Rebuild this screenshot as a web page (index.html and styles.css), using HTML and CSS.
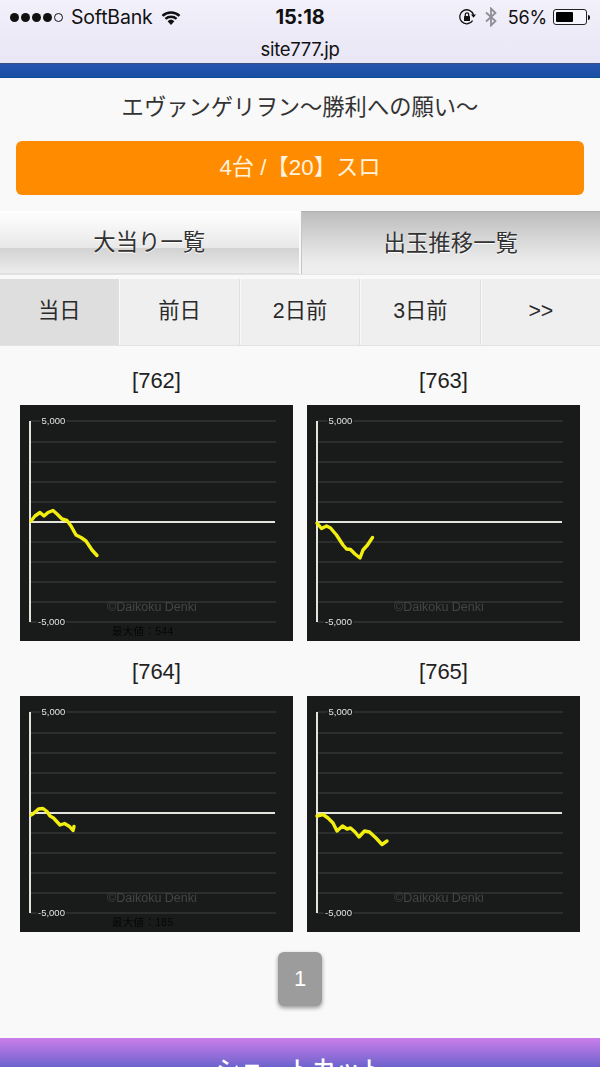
FILE: index.html
```html
<!DOCTYPE html>
<html lang="ja">
<head>
<meta charset="utf-8">
<title>site777.jp</title>
<link rel="stylesheet" href="styles.css">
</head>
<body>
<svg class="defs" width="0" height="0" aria-hidden="true">
  <symbol id="grid" viewBox="0 0 273 236">
    <path class="gl" d="M10 16H256M10 37H256M10 57H256M10 77H256M10 97H256M10 137H256M10 157H256M10 177H256M10 197H256M10 217H256"/>
    <path class="ax" d="M10 16V217M10 117H255"/>
  </symbol>
</svg>
<header class="phone">
  <div class="status">
    <div class="st-left">
      <span class="dots"><i></i><i></i><i></i><i></i><i class="off"></i></span>
      <span class="carrier">SoftBank</span>
      <svg class="wifi" viewBox="0 0 20 15"><path d="M10 15 6.6 11.2a5 5 0 0 1 6.8 0Z"/><path d="M5.3 9.8 3.6 8a9.5 9.5 0 0 1 12.8 0l-1.7 1.8a7 7 0 0 0-9.4 0Z"/><path d="M2.4 6.8.6 4.9a14 14 0 0 1 18.8 0l-1.8 1.9a11.300 11.300 0 0 0-15.200 0Z"/></svg>
    </div>
    <div class="time">15:18</div>
    <div class="st-right">
      <svg class="rot" viewBox="0 0 18 18"><path class="rot-c" d="M14.600 12.600A7 7 0 1 1 15.500 7"/><path d="M13 6.500h5L15.500 9.800Z"/><rect x="6" y="8" width="6" height="5" rx=".6"/><path class="rot-c" d="M7.300 8V6.500a1.700 1.700 0 0 1 3.400 0V8"/></svg>
      <svg class="bt" viewBox="0 0 12 20"><path d="M1 5.500 10.500 14 6 18.500V1.500L10.500 6 1 14.500"/></svg>
      <span class="pct">56%</span>
      <span class="batt"><span class="batt-fill"></span></span><span class="batt-tip"></span>
    </div>
  </div>
  <div class="url">site777.jp</div>
</header>
<div class="bluebar"></div>
<main class="main">
  <h1 class="title">エヴァンゲリヲン〜勝利への願い〜</h1>
  <div class="btn-wrap"><a class="orange">4台 /【20】スロ</a></div>
  <nav class="tabs">
    <a class="tab tab-off">大当り一覧</a>
    <a class="tab tab-on">出玉推移一覧</a>
  </nav>
  <nav class="days">
    <a class="day day-on">当日</a>
    <a class="day">前日</a>
    <a class="day">2日前</a>
    <a class="day">3日前</a>
    <a class="day">&gt;&gt;</a>
  </nav>
  <section class="charts">
    <figure class="cell">
      <figcaption>[762]</figcaption>
      <svg class="chart" viewBox="0 0 273 236">
        <use href="#grid"/>
        <text class="lab" x="21.500" y="19">5,000</text><text class="lab" x="18" y="219.500">-5,000</text>
        <text class="wm" x="87" y="206">©Daikoku Denki</text>
        <text class="max" x="92" y="229.500">最大値：544</text>
        <polyline class="ln" points="11,116 15,111 20,107.500 24,111 28,107.500 33,105.500 37,109 42,114 47,115.500 51,121 56,130 61,132.500 66,136 72,145 77,150.500"/>
      </svg>
    </figure>
    <figure class="cell">
      <figcaption>[763]</figcaption>
      <svg class="chart" viewBox="0 0 273 236">
        <use href="#grid"/>
        <text class="lab" x="21.500" y="19">5,000</text><text class="lab" x="18" y="219.500">-5,000</text>
        <text class="wm" x="87" y="206">©Daikoku Denki</text>
        <polyline class="ln" points="10,118 14.500,123.500 19.500,121 23.500,123 29.500,130 36,140 39.500,144 43.500,144.500 48,149 53,153 56,145 60.500,140 65.500,132.500"/>
      </svg>
    </figure>
    <figure class="cell">
      <figcaption>[764]</figcaption>
      <svg class="chart" viewBox="0 0 273 236">
        <use href="#grid"/>
        <text class="lab" x="21.500" y="19">5,000</text><text class="lab" x="18" y="219.500">-5,000</text>
        <text class="wm" x="87" y="206">©Daikoku Denki</text>
        <text class="max" x="92" y="229.500">最大値：185</text>
        <polyline class="ln" points="11,119 14,117 18.500,113 23,112.500 27,115.500 30,120 33.500,122 40,129 44.500,127.500 49.500,130.500 53,134.500 54,130.500"/>
      </svg>
    </figure>
    <figure class="cell">
      <figcaption>[765]</figcaption>
      <svg class="chart" viewBox="0 0 273 236">
        <use href="#grid"/>
        <text class="lab" x="21.500" y="19">5,000</text><text class="lab" x="18" y="219.500">-5,000</text>
        <text class="wm" x="87" y="206">©Daikoku Denki</text>
        <polyline class="ln" points="10,120 16,118.500 21,122 26,127 30,135 35.500,130 40,133 43.500,132 48,136 52,141 57.500,135 62.500,136 69,142 75,148.500 80,145"/>
      </svg>
    </figure>
  </section>
  <div class="pager"><a class="page">1</a></div>
</main>
<footer class="foot">ショートカット</footer>
</body>
</html>
```

FILE: styles.css
```css
* { box-sizing: border-box; }
html, body { margin: 0; height: 1067px; overflow: hidden; }
body {
  background: #f9f9f9;
  color: #2a2a2a;
  font-family: "Liberation Sans", "Noto Sans CJK JP", sans-serif;
}
a { display: block; text-decoration: none; color: inherit; }
.defs { position: absolute; }

.phone {
  height: 63px;
  background: linear-gradient(#f2f0fa, #e9e6f6);
  color: #111;
}
.status {
  height: 34px;
  padding: 0 10px 0 10px;
  display: grid;
  grid-template-columns: 1fr auto 1fr;
  align-items: center;
}
.st-left, .st-right { display: flex; align-items: center; }
.st-right { justify-content: flex-end; }
.dots { display: flex; gap: 2px; }
.dots i { width: 9px; height: 9px; border-radius: 50%; background: #111; }
.dots i.off { background: none; border: 1px solid #111; }
.carrier { margin-left: 8px; font-size: 19.500px; font-family: "Inter", "Liberation Sans", sans-serif; letter-spacing: -.2px; }
.wifi { width: 20px; height: 15px; margin-left: 9px; fill: #111; }
.time { font-size: 20px; font-weight: 700; font-family: "Inter", "Liberation Sans", sans-serif; letter-spacing: -.1px; }
.rot { width: 18px; height: 18px; fill: #111; }
.rot-c { fill: none; stroke: #111; stroke-width: 1.300; }
.bt { width: 12px; height: 20px; margin-left: 9px; fill: none; stroke: #8e8e96; stroke-width: 1.800; }
.pct { margin-left: 11px; font-size: 18px; font-family: "Inter", "Liberation Sans", sans-serif; letter-spacing: -.2px; }
.batt { width: 34px; height: 16px; margin-left: 6px; border: 1px solid #222; border-radius: 3px; padding: 2px; background: #f6f5fb; }
.batt-fill { display: block; width: 62%; height: 100%; background: #000; border-radius: 1px; }
.batt-tip { width: 2px; height: 5px; margin-left: 1px; background: #111; border-radius: 0 2px 2px 0; }
.url { text-align: center; font-size: 18.500px; line-height: 20px; margin-top: 5px; font-family: "Inter", "Liberation Sans", sans-serif; letter-spacing: -.3px; }

.bluebar {
  height: 15px;
  background: linear-gradient(#2654ad, #174fa4);
  border-top: 1px solid #3a4f86;
  border-bottom: 1px solid #0f4a94;
}

.title {
  margin: 0;
  height: 63px;
  padding-top: 15px;
  text-align: center;
  font-size: 22.300px;
  line-height: 30px;
  font-weight: 400;
  color: #333;
}
.btn-wrap { padding: 0 16px; }
.orange {
  height: 54px;
  line-height: 54px;
  text-align: center;
  border-radius: 6px;
  background: #ff8c00;
  color: #fff3df;
  font-size: 22.300px;
}

.tabs { display: flex; margin-top: 16px; height: 64px; gap: 2px; border-bottom: 1px solid #e4e4e4; }
.tab {
  flex: 1;
  text-align: center;
  font-size: 22.400px;
  line-height: 64px;
  color: #333;
  text-shadow: 0 1px 1px #fff;
}
.tab-off {
  background: linear-gradient(#ffffff 0, #e8e8e8 59%, #d2d2d2 59.500%, #ececec 100%);
  border-bottom: 1px solid #ddd;
}
.tab-on {
  background: linear-gradient(#bcbcbc 0, #d8d8d8 45%, #ececec 80%, #eeeeee 100%);
  border-top: 1px solid #b0b0b0;
  border-left: 1px solid #c4c4c4;
}

.days { display: flex; height: 67px; margin-top: 4px; gap: 1px; border-bottom: 1px solid #e2e2e2; }
.day {
  flex: 1;
  text-align: center;
  font-size: 21.300px;
  line-height: 65px;
  background: #efefef;
  color: #2a2a2a;
  border-right: 1px solid #e0e0e0;
}
.day:last-child { border-right: 0; }
.day-on { background: #dedede; }

.charts {
  display: grid;
  grid-template-columns: 273px 273px;
  column-gap: 14px;
  padding: 0 20px;
}
.cell { margin: 0; height: 291px; }
figcaption {
  height: 59px;
  padding-top: 21px;
  text-align: center;
  font-size: 22px;
  line-height: 28px;
  color: #222;
}
.chart { display: block; width: 273px; height: 236px; background: #191b1a; filter: blur(.5px); }
.gl { fill: none; stroke: #414341; stroke-width: 1; }
.ax { fill: none; stroke: #e4e4dc; stroke-width: 2; }
.lab { font-size: 9.500px; fill: #e2e2e2; font-family: "Liberation Sans", sans-serif; paint-order: stroke; stroke: #191b1a; stroke-width: 3px; }
.wm { font-size: 12.500px; fill: #444545; font-family: "Liberation Sans", sans-serif; }
.max { font-size: 10.500px; fill: #060606; letter-spacing: .3px; }
.ln { fill: none; stroke: #f2ee10; stroke-width: 3.400; stroke-linejoin: round; stroke-linecap: round; }

.pager { display: flex; justify-content: center; padding-top: 24px; }
.page {
  width: 44px;
  height: 54px;
  line-height: 54px;
  text-align: center;
  border-radius: 6px;
  background: #9c9c9c;
  color: #fff;
  font-size: 22px;
  box-shadow: 0 2px 4px rgba(0, 0, 0, .4);
}

.foot {
  position: absolute;
  left: 0;
  right: 0;
  top: 1038px;
  height: 60px;
  padding-top: 14px;
  text-align: center;
  font-size: 24px;
  line-height: 36px;
  font-weight: 500;
  color: #fff;
  background: linear-gradient(#cb7eea, #6a62cc 30px);
}
```
